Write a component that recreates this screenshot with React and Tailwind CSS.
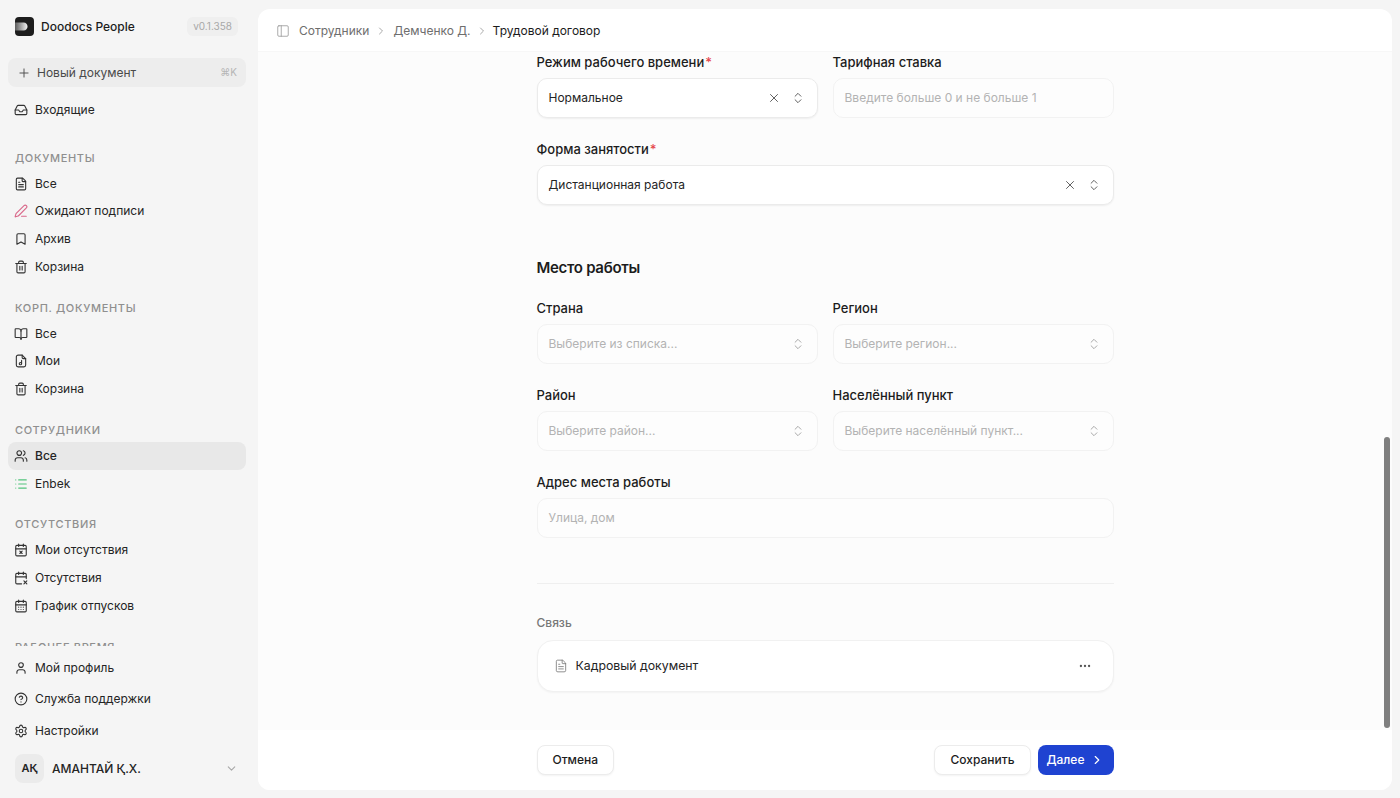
import {
  BookOpen,
  Bookmark,
  CalendarDays,
  CalendarX,
  CalendarX2,
  ChevronDown,
  ChevronRight,
  ChevronsUpDown,
  CircleHelp,
  Ellipsis,
  FileText,
  Inbox,
  List,
  PanelLeft,
  PenLine,
  Plus,
  Settings,
  Trash2,
  User,
  Users,
  X,
} from 'lucide-react';

// file outline with a small note inside, lucide has no close match
const FileNote = ({size, strokeWidth, className}) => (
  <svg
    width={size}
    height={size}
    viewBox="0 0 24 24"
    fill="none"
    stroke="currentColor"
    strokeWidth={strokeWidth}
    strokeLinecap="round"
    strokeLinejoin="round"
    className={className}
  >
    <path d="M14 2H7a3 3 0 0 0-3 3v14a3 3 0 0 0 3 3h10a3 3 0 0 0 3-3V8z" />
    <path d="M14 2v4a2 2 0 0 0 2 2h4" />
    <path d="M13 11v5.500" />
    <circle cx="11" cy="16.500" r="2" />
  </svg>
);

const groups = [
  {
    title: 'Документы',
    items: [
      {label: 'Все', icon: FileText},
      {label: 'Ожидают подписи', icon: PenLine, color: 'text-[#d9688a]'},
      {label: 'Архив', icon: Bookmark},
      {label: 'Корзина', icon: Trash2},
    ],
  },
  {
    title: 'Корп. документы',
    items: [
      {label: 'Все', icon: BookOpen},
      {label: 'Мои', icon: FileNote},
      {label: 'Корзина', icon: Trash2},
    ],
  },
  {
    title: 'Сотрудники',
    items: [
      {label: 'Все', icon: Users, active: true},
      {label: 'Enbek', icon: List, color: 'text-[#52c47c]'},
    ],
  },
  {
    title: 'Отсутствия',
    items: [
      {label: 'Мои отсутствия', icon: CalendarX},
      {label: 'Отсутствия', icon: CalendarX2},
      {label: 'График отпусков', icon: CalendarDays},
    ],
  },
];

const NavItem = ({item}) => {
  const Icon = item.icon;
  return (
    <div
      className={`h-[27.75px] ml-2 mr-3 px-[6px] flex items-center gap-[7px] rounded-lg text-xs text-[#242424] ${
        item.active ? 'bg-[#e8e8e8] font-medium' : ''
      }`}
    >
      <Icon size={14} strokeWidth={1.9} className={item.color || 'text-[#333333]'} />
      <span>{item.label}</span>
    </div>
  );
};

const Logo = () => (
  <svg width="19" height="19" viewBox="0 0 19 19">
    <defs>
      <linearGradient id="logo-fill" x1="0" x2="1" y1="0" y2="0">
        <stop offset="0" stopColor="#5a5a5a" />
        <stop offset="1" stopColor="#f4f4f4" />
      </linearGradient>
    </defs>
    <rect width="19" height="19" rx="4" fill="#1d1d1d" />
    <path d="M0 5.500h8.500c2.500 0 4 1.800 4 4s-1.500 4-4 4H0z" fill="url(#logo-fill)" />
  </svg>
);

const Label = ({children, required}) => (
  <div className="h-5 pt-px flex items-center text-[13px] font-medium text-[#1c1c1c]">
    {children}
    {required && <span className="text-[#e5484d] ml-px">*</span>}
  </div>
);

const Select = ({value, placeholder, clearable}) => (
  <div
    className={`mt-1.5 h-10 pl-[11px] pr-3 flex items-center rounded-[10px] border text-xs ${
      value
        ? 'bg-white border-[#ebebeb] shadow-[0_1px_2px_rgba(0,0,0,0.06)] text-[#242424]'
        : 'bg-[#fdfdfd] border-[#f2f2f2] text-[#b3b3b3]'
    }`}
  >
    <span className="flex-1">{value || placeholder}</span>
    {clearable && <X size={14} strokeWidth={1.6} className="text-[#555555] mr-[10px]" />}
    <ChevronsUpDown
      size={14}
      strokeWidth={1.6}
      className={value ? 'text-[#555555]' : 'text-[#a3a3a3]'}
    />
  </div>
);

const Input = ({placeholder}) => (
  <div className="mt-1.5 h-10 px-[11px] flex items-center rounded-[10px] border border-[#f2f2f2] bg-[#fdfdfd] text-xs text-[#b3b3b3]">
    {placeholder}
  </div>
);

export default function App() {
  return (
    <div
      className="h-screen flex bg-[#f5f5f5] overflow-hidden text-[#242424]"
      style={{fontFamily: 'Inter, "Noto Sans", sans-serif'}}
    >
      {/* Sidebar */}
      <aside className="w-[258px] shrink-0 h-full flex flex-col">
        <div className="flex-1 min-h-0 max-h-[646px] overflow-hidden">
          <div className="h-[53px] pl-[15px] pr-5 flex items-center">
            <Logo />
            <span className="ml-[7px] flex-1 text-xs font-medium text-[#1c1c1c]">Doodocs People</span>
            <span className="px-[6px] py-0.5 rounded-md bg-[#efefef] text-[10px] text-[#a8a8a8]">
              v0.1.358
            </span>
          </div>
          <div className="ml-2 mr-3 mt-[5px] h-[29px] px-[9px] flex items-center gap-1.5 rounded-lg bg-[#ededed] text-xs text-[#4a4a4a]">
            <Plus size={14} strokeWidth={1.6} />
            <span className="flex-1">Новый документ</span>
            <span className="text-[10px] text-[#b5b5b5]">⌘K</span>
          </div>
          <div className="mt-[9px]">
            <NavItem item={{label: 'Входящие', icon: Inbox}} />
          </div>
          <div className="mt-[22px]">
            {groups.map((group) => (
              <section key={group.title} className="mb-[15px]">
                <div className="h-6 px-[15px] flex items-center text-[11px] font-medium uppercase tracking-[0.06em] text-[#8f8f8f]">
                  {group.title}
                </div>
                {group.items.map((item) => (
                  <NavItem key={item.label} item={item} />
                ))}
              </section>
            ))}
            <div className="h-6 px-[15px] flex items-center text-[11px] font-medium uppercase tracking-[0.06em] text-[#8f8f8f]">
              Рабочее время
            </div>
          </div>
        </div>

        <div className="mt-1.5">
          {[
            {label: 'Мой профиль', icon: User},
            {label: 'Служба поддержки', icon: CircleHelp},
            {label: 'Настройки', icon: Settings},
          ].map((item) => {
            const Icon = item.icon;
            return (
              <div key={item.label} className="h-[31.5px] ml-2 mr-3 px-[6px] flex items-center gap-[7px] text-xs">
                <Icon size={14} strokeWidth={1.9} className="text-[#333333]" />
                <span>{item.label}</span>
              </div>
            );
          })}
          <div className="h-[40px] mt-0.5 pl-[15px] pr-5 flex items-center">
            <div className="w-[29px] h-[29px] rounded-lg bg-[#ebebeb] flex items-center justify-center text-[11px] font-semibold">
              АҚ
            </div>
            <span className="ml-2 flex-1 text-xs font-medium">АМАНТАЙ Қ.Х.</span>
            <ChevronDown size={13} className="text-[#a8a8a8]" />
          </div>
        </div>
      </aside>

      {/* Main card */}
      <main className="relative w-[1134px] h-[781px] mt-[9px] flex flex-col rounded-xl bg-white overflow-hidden">
        <header className="h-[43px] shrink-0 pt-0.5 px-[18px] flex items-center text-xs border-b border-[#f7f7f7]">
          <PanelLeft size={14} strokeWidth={1.4} className="text-[#999999] mr-[9px]" />
          <span className="text-[#6e6e6e]">Сотрудники</span>
          <ChevronRight size={12} className="text-[#a8a8a8] mx-[6px]" />
          <span className="text-[#6e6e6e]">Демченко Д.</span>
          <ChevronRight size={12} className="text-[#a8a8a8] mx-[5px]" />
          <span className="text-[#1c1c1c]">Трудовой договор</span>
        </header>

        <div className="flex-1 min-h-0 bg-[#fcfcfc] overflow-hidden">
          <div className="w-[577px] mx-auto">
            <div className="grid grid-cols-2 gap-x-[15px]">
              <div>
                <Label required>Режим рабочего времени</Label>
                <Select value="Нормальное" clearable />
              </div>
              <div>
                <Label>Тарифная ставка</Label>
                <Input placeholder="Введите больше 0 и не больше 1" />
              </div>
            </div>
            <div className="mt-[21px]">
              <Label required>Форма занятости</Label>
              <Select value="Дистанционная работа" clearable />
            </div>

            <h2 className="mt-[51px] h-6 pt-px flex items-center text-[15px] font-semibold tracking-[-0.02em] text-[#1c1c1c]">
              Место работы
            </h2>
            <div className="mt-[18px] grid grid-cols-2 gap-x-[15px] gap-y-[21px]">
              <div>
                <Label>Страна</Label>
                <Select placeholder="Выберите из списка..." />
              </div>
              <div>
                <Label>Регион</Label>
                <Select placeholder="Выберите регион..." />
              </div>
              <div>
                <Label>Район</Label>
                <Select placeholder="Выберите район..." />
              </div>
              <div>
                <Label>Населённый пункт</Label>
                <Select placeholder="Выберите населённый пункт..." />
              </div>
            </div>
            <div className="mt-[21px]">
              <Label>Адрес места работы</Label>
              <Input placeholder="Улица, дом" />
            </div>

            <div className="mt-[45px] h-px bg-[#efefef]" />
            <div className="mt-[28px] h-5 pt-px flex items-center text-xs font-medium text-[#777777]">Связь</div>
            <div className="mt-2 h-[52px] pl-[16px] pr-[21px] flex items-center rounded-2xl border border-[#f1f1f1] bg-white shadow-[0_1px_2px_rgba(0,0,0,0.04)]">
              <FileText size={14} strokeWidth={1.4} className="text-[#777777] mr-2" />
              <span className="flex-1 text-[12.3px] text-[#242424]">Кадровый документ</span>
              <Ellipsis size={14} className="text-[#555555]" />
            </div>
          </div>
        </div>

        <footer className="h-[60px] shrink-0 bg-white">
          <div className="w-[577px] h-[45px] mx-auto flex items-end justify-between">
            <button className="h-[30px] px-[15px] rounded-lg border border-[#ececec] bg-white text-xs font-medium text-[#1c1c1c] shadow-[0_1px_2px_rgba(0,0,0,0.05)]">
              Отмена
            </button>
            <div className="flex gap-[7px]">
              <button className="h-[30px] px-[15px] rounded-lg border border-[#ececec] bg-white text-xs font-medium text-[#1c1c1c] shadow-[0_1px_2px_rgba(0,0,0,0.05)]">
                Сохранить
              </button>
              <button className="h-[30px] w-[76px] pl-[9px] flex items-center gap-[6px] rounded-lg bg-[#1f43d1] text-xs font-medium text-white">
                Далее
                <ChevronRight size={14} />
              </button>
            </div>
          </div>
        </footer>

        {/* Scrollbar */}
        <div className="absolute left-[1126px] top-[428px] w-[6px] h-[291px] rounded-full bg-[#7f7f7f]" />
      </main>
    </div>
  );
}
